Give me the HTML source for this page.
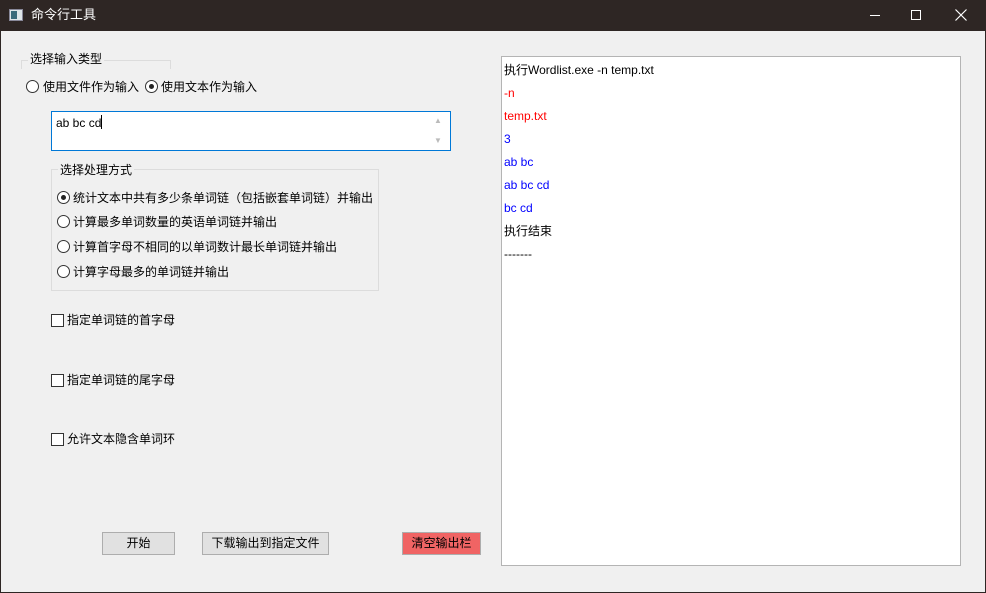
<!DOCTYPE html>
<html><head><meta charset="utf-8"><style>
*{margin:0;padding:0;box-sizing:border-box}
body{width:986px;height:593px;background:#2e2624;position:relative;overflow:hidden;font-family:"Liberation Sans","Noto Sans CJK SC",sans-serif;font-size:12px;color:#000}
.t{position:absolute;white-space:nowrap;line-height:16px}
#main{position:absolute;left:1px;top:31px;width:984px;height:561px;background:#f0f0f0}
.rb{position:absolute;width:13px;height:13px;border:1px solid #333;border-radius:50%;background:#fff}
.rb.on::after{content:"";position:absolute;left:3px;top:3px;width:5px;height:5px;border-radius:50%;background:#222}
.cb{position:absolute;width:13px;height:13px;border:1px solid #333;background:#fff}
.btn{position:absolute;height:23px;border:1px solid #adadad;background:#e1e1e1;text-align:center;line-height:21px}
</style></head><body>
<div style="position:absolute;left:9px;top:9px;width:14px;height:12px;background:#dfe6e8;border:1px solid #889"><div style="position:absolute;left:1px;top:1px;width:6px;height:8px;background:#3a6b7a"></div></div>
<div class="t" style="left:31px;top:7px;color:#fff;font-size:13px">命令行工具</div>
<div style="position:absolute;left:870px;top:15px;width:10px;height:1px;background:#fff"></div>
<div style="position:absolute;left:911px;top:10px;width:10px;height:10px;border:1px solid #fff"></div>
<svg style="position:absolute;left:955px;top:9px" width="12" height="12"><path d="M0.5 0.5L11.5 11.5M11.5 0.5L0.5 11.5" stroke="#fff" stroke-width="1.2"/></svg>
<div id="main"></div>
<div style="position:absolute;left:21px;top:60px;width:150px;height:9px;border:1px solid #dcdcdc;border-bottom:none"></div>
<div class="t" style="left:28px;top:51px;background:#f0f0f0;padding:0 2px">选择输入类型</div>
<div class="rb" style="left:26px;top:80px"></div><div class="t" style="left:43px;top:79px">使用文件作为输入</div>
<div class="rb on" style="left:145px;top:80px"></div><div class="t" style="left:161px;top:79px">使用文本作为输入</div>
<div style="position:absolute;left:51px;top:111px;width:400px;height:40px;background:#fff;border:1px solid #0078d7"></div>
<div class="t" style="left:56px;top:115px">ab bc cd<span style="display:inline-block;width:1px;height:14px;background:#000;vertical-align:-2px"></span></div>
<div class="t" style="left:434px;top:113px;color:#bbb;font-size:8px">▲</div><div class="t" style="left:434px;top:133px;color:#bbb;font-size:8px">▼</div>
<div style="position:absolute;left:51px;top:169px;width:328px;height:122px;border:1px solid #dcdcdc"></div>
<div class="t" style="left:58px;top:162px;background:#f0f0f0;padding:0 2px">选择处理方式</div>
<div class="rb on" style="left:57px;top:191px"></div><div class="t" style="left:73px;top:190px">统计文本中共有多少条单词链（包括嵌套单词链）并输出</div>
<div class="rb" style="left:57px;top:215px"></div><div class="t" style="left:73px;top:214px">计算最多单词数量的英语单词链并输出</div>
<div class="rb" style="left:57px;top:240px"></div><div class="t" style="left:73px;top:239px">计算首字母不相同的以单词数计最长单词链并输出</div>
<div class="rb" style="left:57px;top:265px"></div><div class="t" style="left:73px;top:264px">计算字母最多的单词链并输出</div>
<div class="cb" style="left:51px;top:314px"></div><div class="t" style="left:67px;top:312px">指定单词链的首字母</div>
<div class="cb" style="left:51px;top:374px"></div><div class="t" style="left:67px;top:372px">指定单词链的尾字母</div>
<div class="cb" style="left:51px;top:433px"></div><div class="t" style="left:67px;top:431px">允许文本隐含单词环</div>
<div class="btn" style="left:102px;top:532px;width:73px">开始</div>
<div class="btn" style="left:202px;top:532px;width:127px">下载输出到指定文件</div>
<div class="btn" style="left:402px;top:532px;width:79px;background:#f06464">清空输出栏</div>
<div style="position:absolute;left:501px;top:56px;width:460px;height:510px;background:#fff;border:1px solid #b4b4b4"></div>
<div class="t" style="left:504px;top:62px">执行Wordlist.exe -n temp.txt</div>
<div class="t" style="left:504px;top:85px;color:#f00">-n</div>
<div class="t" style="left:504px;top:108px;color:#f00">temp.txt</div>
<div class="t" style="left:504px;top:131px;color:#00f">3</div>
<div class="t" style="left:504px;top:154px;color:#00f">ab bc</div>
<div class="t" style="left:504px;top:177px;color:#00f">ab bc cd</div>
<div class="t" style="left:504px;top:200px;color:#00f">bc cd</div>
<div class="t" style="left:504px;top:223px">执行结束</div>
<div class="t" style="left:504px;top:246px">-------</div>
</body></html>
